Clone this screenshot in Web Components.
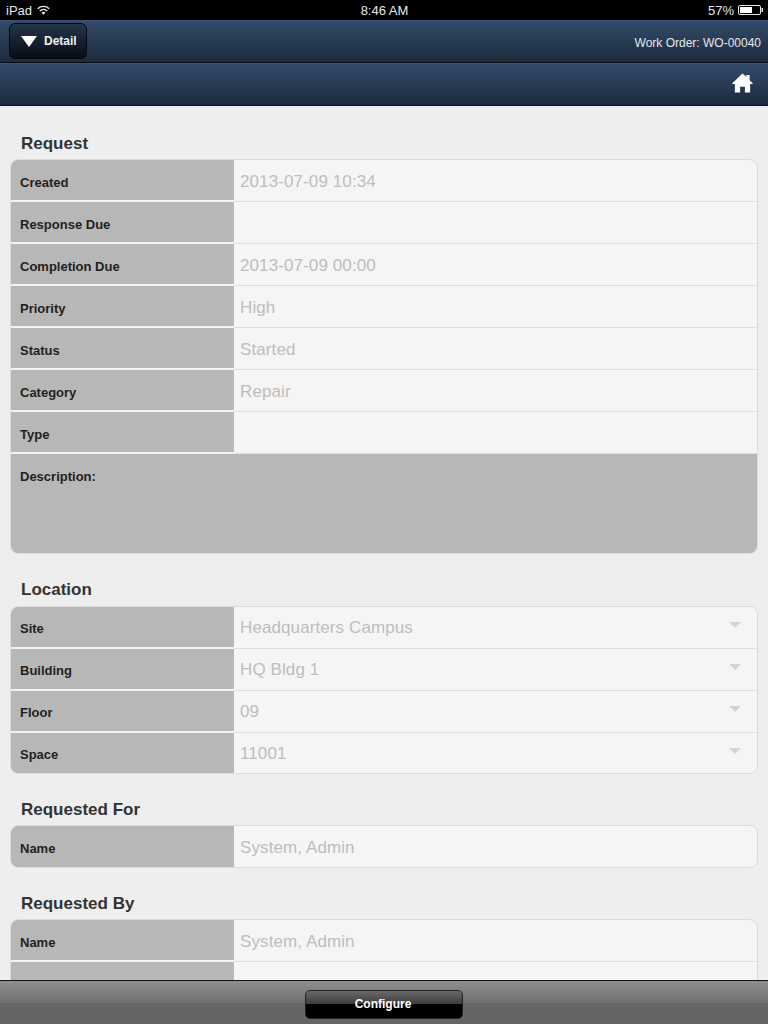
<!DOCTYPE html>
<html>
<head>
<meta charset="utf-8">
<title>Work Order</title>
<style>
  html, body { margin: 0; height: 100%; }
  body { font-family: "Liberation Sans", sans-serif; background: #eeeeee; overflow: hidden; }
  app-shell { height: 1024px; }
  /* this table sits a pixel tighter in the original */
  form-section.tight { --title-gap: 7px; --label-top: 2px; --value-top: 0px; --last-height: 40px; --last-label-bottom: 0px; --last-value-top: 1px; }
</style>
</head>
<body>
<app-shell>
  <status-bar slot="top"></status-bar>
  <detail-bar slot="top" order="Work Order: WO-00040"></detail-bar>
  <home-bar slot="top"></home-bar>

  <form-section title="Request">
    <form-row label="Created" value="2013-07-09 10:34"></form-row>
    <form-row label="Response Due"></form-row>
    <form-row label="Completion Due" value="2013-07-09 00:00"></form-row>
    <form-row label="Priority" value="High"></form-row>
    <form-row label="Status" value="Started"></form-row>
    <form-row label="Category" value="Repair"></form-row>
    <form-row label="Type"></form-row>
    <form-note label="Description:"></form-note>
  </form-section>

  <form-section class="tight" title="Location">
    <form-row label="Site" value="Headquarters Campus" select></form-row>
    <form-row label="Building" value="HQ Bldg 1" select></form-row>
    <form-row label="Floor" value="09" select></form-row>
    <form-row label="Space" value="11001" select last></form-row>
  </form-section>

  <form-section title="Requested For">
    <form-row label="Name" value="System, Admin" last></form-row>
  </form-section>

  <form-section title="Requested By">
    <form-row label="Name" value="System, Admin"></form-row>
    <form-row label="Email"></form-row>
  </form-section>

  <footer-bar slot="bottom" action="Configure"></footer-bar>
</app-shell>

<script>
class AppShell extends HTMLElement {
  connectedCallback() {
    if (this.shadowRoot) return;
    this.attachShadow({ mode: "open" }).innerHTML = `
      <style>
        :host { display: flex; flex-direction: column; }
        main { flex: 1; min-height: 0; overflow: hidden; padding: 2px 10px 0; }
      </style>
      <slot name="top"></slot>
      <main><slot></slot></main>
      <slot name="bottom"></slot>
    `;
  }
}

class StatusBar extends HTMLElement {
  connectedCallback() {
    if (this.shadowRoot) return;
    this.attachShadow({ mode: "open" }).innerHTML = `
      <style>
        :host {
          display: grid;
          grid-template-columns: 1fr auto 1fr;
          align-items: center;
          height: 20px;
          padding: 0 5px 0 6px;
          background: #000;
          color: #e6e6e6;
          font-size: 13px;
        }
        .left { display: flex; align-items: center; gap: 5px; }
        .right { display: flex; align-items: center; justify-content: flex-end; gap: 4px; }
        svg { display: block; }
      </style>
      <div class="left">
        <span>iPad</span>
        <svg width="13" height="10" viewBox="0 0 14 10" fill="none" stroke="#e6e6e6" stroke-width="1.5">
          <path d="M0.8 3.6a9 9 0 0 1 12.4 0"/>
          <path d="M3 6a5.8 5.8 0 0 1 8 0"/>
          <path d="M7 10 4.9 7.9a3 3 0 0 1 4.2 0z" fill="#e6e6e6" stroke="none"/>
        </svg>
      </div>
      <span>8:46 AM</span>
      <div class="right">
        <span>57%</span>
        <svg width="25" height="10" viewBox="0 0 25 10">
          <rect x="0.5" y="0.5" width="22" height="9" rx="1.5" fill="none" stroke="#e6e6e6"/>
          <rect x="2" y="2" width="12" height="6" fill="#fff"/>
          <rect x="23.5" y="3" width="1.5" height="4" fill="#e6e6e6"/>
        </svg>
      </div>
    `;
  }
}

const barStyle = `
  :host {
    display: flex;
    align-items: center;
    box-sizing: border-box;
    background: linear-gradient(#3a5475 0, #324a68 6%, #1c2a3c 100%);
    border-bottom: 1px solid #0a0f16;
  }
`;

class DetailBar extends HTMLElement {
  connectedCallback() {
    if (this.shadowRoot) return;
    this.attachShadow({ mode: "open" }).innerHTML = `
      <style>
        ${barStyle}
        :host { height: 43px; justify-content: space-between; padding: 0 7px 0 9px; }
        button {
          display: flex;
          align-items: center;
          gap: 7px;
          box-sizing: border-box;
          width: 78px;
          height: 36px;
          margin: 0;
          padding: 0 0 0 11px;
          border: 1px solid #05080c;
          border-radius: 6px;
          background: linear-gradient(#24364d, #080c12);
          color: #f2f2f2;
          font: bold 12px "Liberation Sans", sans-serif;
        }
        svg { display: block; }
        span { color: #e4e7ea; font-size: 12px; margin-top: 3px; }
      </style>
      <button type="button">
        <svg width="16" height="11" viewBox="0 0 16 11"><path d="M0 0h16L8 11z" fill="#fff"/></svg>
        Detail
      </button>
      <span>${this.getAttribute("order") ?? ""}</span>
    `;
  }
}

class HomeBar extends HTMLElement {
  connectedCallback() {
    if (this.shadowRoot) return;
    this.attachShadow({ mode: "open" }).innerHTML = `
      <style>
        ${barStyle}
        :host { height: 43px; justify-content: flex-end; padding: 0 15px 0 0; }
        svg { display: block; margin-bottom: 2px; }
      </style>
      <svg width="21" height="20" viewBox="0 0 22 20">
        <path fill="#fff" d="M11 0 15 3.5V1.5H18.5V7L22 10.5 21 11H19V20H13.5V14H8.5V20H3V11H1L0 10.5z"/>
      </svg>
    `;
  }
}

class FormSection extends HTMLElement {
  connectedCallback() {
    if (this.shadowRoot) return;
    this.attachShadow({ mode: "open" }).innerHTML = `
      <style>
        :host { display: block; padding-top: 24px; }
        h2 {
          margin: 0 0 var(--title-gap, 6px) 11px;
          height: 21px;
          color: #333;
          font-size: 17px;
          line-height: 23px;
          font-weight: bold;
        }
        .table {
          width: 748px;
          box-sizing: border-box;
          border: 1px solid #dcdcdc;
          border-radius: 8px;
          background: #f5f5f5;
          overflow: hidden;
        }
      </style>
      <h2>${this.getAttribute("title") ?? ""}</h2>
      <div class="table"><slot></slot></div>
    `;
  }
}

class FormRow extends HTMLElement {
  connectedCallback() {
    if (this.shadowRoot) return;
    const value = this.getAttribute("value") ?? "";
    const arrow = this.hasAttribute("select")
      ? `<svg width="12" height="6" viewBox="0 0 12 6"><path d="M0 0h12L6 6z" fill="#d4d4d4"/></svg>`
      : "";
    this.attachShadow({ mode: "open" }).innerHTML = `
      <style>
        :host { display: grid; grid-template-columns: 223px 1fr; height: 42px; box-sizing: border-box; }
        :host([last]) { height: var(--last-height, 41px); }
        .label {
          display: flex;
          align-items: center;
          padding: var(--label-top, 4px) 0 0 9px;
          background: #b7b7b7;
          border-bottom: 2px solid #f2f2f2;
          color: #222;
          font-size: 13px;
          font-weight: bold;
        }
        :host([last]) .label { border-bottom: 0; padding-bottom: var(--last-label-bottom, 1px); }
        .value {
          display: flex;
          align-items: center;
          justify-content: space-between;
          padding: var(--value-top, 2px) 16px 0 6px;
          border-bottom: 1px solid #dedede;
          color: #bdbdbd;
          font-size: 17px;
          letter-spacing: 0.1px;
        }
        :host([last]) .value { border-bottom: 0; padding-top: var(--last-value-top, 2px); }
        svg { display: block; margin-bottom: 5px; }
      </style>
      <div class="label">${this.getAttribute("label") ?? ""}</div>
      <div class="value"><span>${value}</span>${arrow}</div>
    `;
  }
}

class FormNote extends HTMLElement {
  connectedCallback() {
    if (this.shadowRoot) return;
    this.attachShadow({ mode: "open" }).innerHTML = `
      <style>
        :host {
          display: block;
          box-sizing: border-box;
          height: 99px;
          padding: 15px 9px 0;
          background: #b7b7b7;
          color: #222;
          font-size: 13px;
          font-weight: bold;
        }
      </style>
      ${this.getAttribute("label") ?? ""}
    `;
  }
}

class FooterBar extends HTMLElement {
  connectedCallback() {
    if (this.shadowRoot) return;
    this.attachShadow({ mode: "open" }).innerHTML = `
      <style>
        :host {
          display: flex;
          justify-content: center;
          box-sizing: border-box;
          height: 44px;
          padding-top: 9px;
          border-top: 1px solid #111;
          background: linear-gradient(#8e8e8e 0, #707070 50%, #656565 50%, #656565 100%);
        }
        button {
          box-sizing: border-box;
          width: 158px;
          height: 29px;
          padding: 0 2px 2px 0;
          border: 1px solid #222;
          border-radius: 5px;
          background: linear-gradient(#6a6a6a 0, #3a3a3a 50%, #000 50%, #000 100%);
          color: #fff;
          font: bold 12px "Liberation Sans", sans-serif;
        }
      </style>
      <button type="button">${this.getAttribute("action") ?? ""}</button>
    `;
  }
}

customElements.define("app-shell", AppShell);
customElements.define("status-bar", StatusBar);
customElements.define("detail-bar", DetailBar);
customElements.define("home-bar", HomeBar);
customElements.define("form-section", FormSection);
customElements.define("form-row", FormRow);
customElements.define("form-note", FormNote);
customElements.define("footer-bar", FooterBar);
</script>
</body>
</html>
